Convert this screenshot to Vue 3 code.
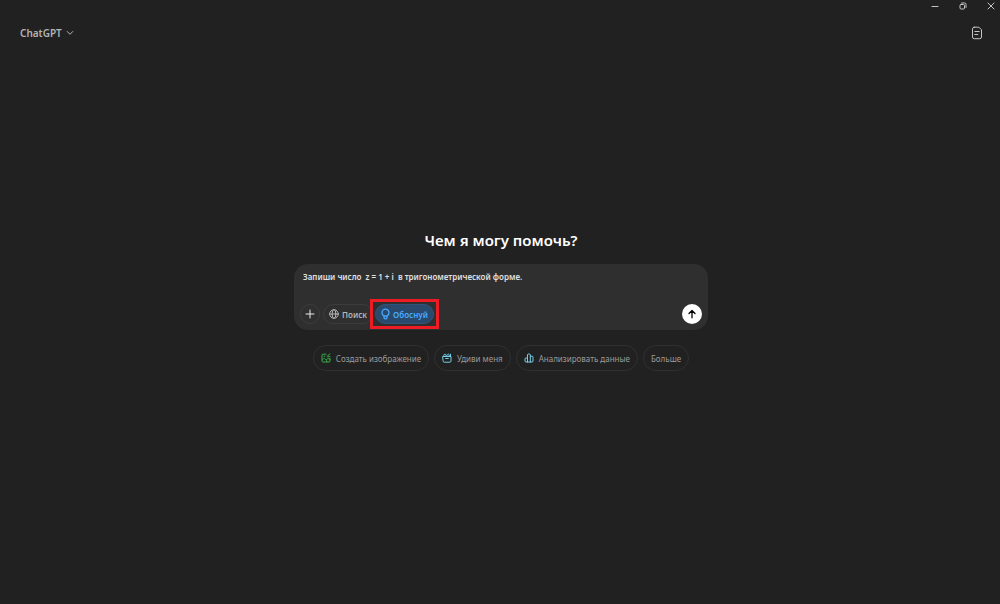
<script setup>
import { ref } from 'vue'

const prompt = ref('Запиши число  z = 1 + i  в тригонометрической форме.')
const reasoning = ref(true)
const suggestions = [
  { label: 'Создать изображение', icon: 'image' },
  { label: 'Удиви меня', icon: 'gift' },
  { label: 'Анализировать данные', icon: 'chart' },
  { label: 'Больше', icon: '' },
]
</script>

<template>
  <div class="window">
    <div class="titlebar">
      <button class="win" aria-label="Свернуть">
        <svg width="8" height="8" viewBox="0 0 8 8"><path d="M1 4.5h6" /></svg>
      </button>
      <button class="win" aria-label="Восстановить">
        <svg width="8" height="8" viewBox="0 0 8 8"><rect x="1" y="2.5" width="4.5" height="4.5" rx="1" /><path d="M2.5 1h3.2Q7 1 7 2.3v3.2" /></svg>
      </button>
      <button class="win" aria-label="Закрыть">
        <svg width="8" height="8" viewBox="0 0 8 8"><path d="M1 1l6 6M7 1l-6 6" /></svg>
      </button>
    </div>

    <header class="header">
      <button class="model">
        ChatGPT
        <svg width="8" height="8" viewBox="0 0 8 8"><path d="M1.2 2.5L4 5.3l2.8-2.8" /></svg>
      </button>
      <button class="note" aria-label="Открыть чат">
        <svg width="12" height="14" viewBox="0 0 12 14">
          <path d="M3.200 1.200h4.700L10.500 3.800v7.200a1.700 1.700 0 0 1-1.700 1.700H3.200a1.700 1.700 0 0 1-1.700-1.700V2.900a1.700 1.700 0 0 1 1.700-1.700zM3.800 5.500h4.400M3.800 8.500h3" />
        </svg>
      </button>
    </header>

    <main class="main">
      <h1>Чем я могу помочь?</h1>

      <form class="composer" @submit.prevent>
        <textarea v-model="prompt" rows="1" aria-label="Сообщение" spellcheck="false"></textarea>
        <div class="tools">
          <button type="button" class="round" aria-label="Добавить">
            <svg width="10" height="10" viewBox="0 0 10 10"><path d="M5 1v8M1 5h8" /></svg>
          </button>
          <button type="button" class="tool">
            <svg width="10" height="10" viewBox="0 0 10 10">
              <circle cx="5" cy="5" r="4.3" /><ellipse cx="5" cy="5" rx="1.9" ry="4.3" /><path d="M.8 5h8.4" />
            </svg>
            Поиск
          </button>
          <div class="highlight">
            <button type="button" class="tool active" :aria-pressed="reasoning" @click="reasoning = !reasoning">
              <svg width="9" height="12" viewBox="0 0 9 12">
                <path d="M3 8C1.700 7.300 1 6.100 1 4.700a3.500 3.500 0 0 1 7 0C8 6.100 7.300 7.300 6 8zM3 8v1.500A1.300 1.300 0 0 0 4.300 10.800h.4A1.300 1.300 0 0 0 6 9.500V8" />
              </svg>
              Обоснуй
            </button>
          </div>
          <button type="submit" class="send" aria-label="Отправить">
            <svg width="10" height="10" viewBox="0 0 10 10"><path d="M5 8.800V1.500M2 4.500L5 1.500l3 3" /></svg>
          </button>
        </div>
      </form>

      <div class="chips">
        <button v-for="item in suggestions" :key="item.label" class="chip" :class="item.icon">
          <svg v-if="item.icon === 'image'" width="10" height="10" viewBox="0 0 10 10">
            <path d="M5 1.200H2A1 1 0 0 0 1 2.200V8a1 1 0 0 0 1 1h6a1 1 0 0 0 1-1V5.500M1.200 6.500C3 4.800 4.500 5 6 8.800M5.500 6.500C6.500 5.300 7.800 5.300 9 6.200M6 3.500L9 .8M7 3.700h2M3 3.200h.8" />
          </svg>
          <svg v-else-if="item.icon === 'gift'" width="10" height="10" viewBox="0 0 10 10">
            <path d="M1 3.500h8v4.400A1.300 1.300 0 0 1 7.700 9.200H2.300A1.300 1.300 0 0 1 1 7.900zM3.700 5.500h2.600M1.800 3.300V2.300A1 1 0 0 1 2.800 1.300h.8L4.500 3.300M5 2.500L6.300.9 7.500 2 6.700 3.300M8.500 1.200v2" />
          </svg>
          <svg v-else-if="item.icon === 'chart'" width="10" height="10" viewBox="0 0 10 10">
            <path d="M3.500 9V2a1 1 0 0 1 1-1h.8a1 1 0 0 1 1 1v7M3.500 5H2a1 1 0 0 0-1 1v2a1 1 0 0 0 1 1h6a1 1 0 0 0 1-1V4.200a1 1 0 0 0-1-1H6.300" />
          </svg>
          {{ item.label }}
        </button>
      </div>
    </main>
  </div>
</template>

<style>
body {
  background: #212121;
}
</style>

<style scoped>
.window {
  min-height: 100vh;
  box-sizing: border-box;
  background: #212121;
  color: #ececec;
  font-family: "Noto Sans", "Open Sans", sans-serif;
  font-size: 8px;
}
button {
  display: flex;
  align-items: center;
  justify-content: center;
  box-sizing: border-box;
  margin: 0;
  padding: 0;
  border: 0;
  background: none;
  color: inherit;
  font: inherit;
  white-space: nowrap;
  cursor: pointer;
}
svg {
  flex: none;
  fill: none;
  stroke: currentColor;
  stroke-width: 1;
  stroke-linecap: round;
  stroke-linejoin: round;
}
.titlebar {
  display: flex;
  justify-content: flex-end;
  gap: 20px;
  height: 12px;
  padding-right: 5px;
  color: #c4c4c4;
}
.win {
  width: 8px;
  height: 12px;
}
.header {
  display: flex;
  align-items: center;
  justify-content: space-between;
  height: 42px;
  padding: 0 17px 0 20px;
}
.model {
  gap: 4px;
  color: #b4b4b4;
  font-size: 10px;
  font-weight: 600;
}
.note {
  color: #c4c4c4;
}
.main {
  display: flex;
  flex-direction: column;
  align-items: center;
  padding: 174px 16px 0 18px;
}
h1 {
  margin: 0;
  color: #fff;
  font-size: 15px;
  line-height: 24px;
  font-weight: 600;
}
.composer {
  box-sizing: border-box;
  width: 100%;
  max-width: 414px;
  margin-top: 12px;
  padding: 7px 6px 5px;
  border-radius: 14px;
  background: #2f2f2f;
}
textarea {
  display: block;
  box-sizing: border-box;
  width: 100%;
  height: 32px;
  padding: 0 3px;
  border: 0;
  outline: 0;
  resize: none;
  overflow: hidden;
  background: none;
  color: #e0e0e0;
  font: 600 8px/12px "Noto Sans", "Open Sans", sans-serif;
}
.tools {
  display: flex;
  align-items: center;
  height: 22px;
}
.round,
.tool {
  height: 20px;
  border: 1px solid #3c3c3c;
  border-radius: 10px;
}
.round {
  width: 20px;
}
.tool {
  gap: 3px;
  width: 50px;
  margin-left: 3px;
  color: #b4b4b4;
  font-weight: 600;
}
.highlight {
  position: relative;
  margin-left: 2px;
}
.highlight::after {
  content: "";
  position: absolute;
  inset: -5px;
  border: 3px solid #ed1c24;
  pointer-events: none;
}
.tool.active {
  width: 59px;
  margin: 0;
  border-color: #32527a;
  background: #2a4a6d;
  color: #48aaff;
}
.active svg,
.send svg {
  stroke-width: 1.3;
}
.send {
  width: 20px;
  height: 20px;
  margin-left: auto;
  border-radius: 50%;
  background: #fff;
  color: #000;
}
.chips {
  display: flex;
  flex-wrap: wrap;
  justify-content: center;
  gap: 5px;
  margin-top: 15px;
}
.chip {
  gap: 5px;
  height: 26px;
  padding: 0 7px;
  border: 1px solid #303030;
  border-radius: 13px;
  color: #9b9b9b;
}
.image svg {
  color: #35ae47;
}
.gift svg,
.chart svg {
  color: #76d0eb;
}
</style>
